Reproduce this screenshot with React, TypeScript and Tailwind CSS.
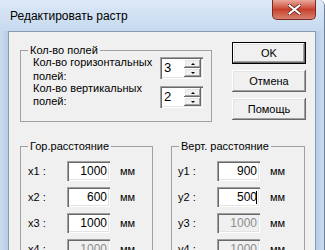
const sunken =
  "shadow-[inset_1px_1px_0_#a0a0a0,inset_2px_2px_0_#696969,inset_-1px_-1px_0_#ffffff,inset_-2px_-2px_0_#e3e3e3]";
const raised =
  "shadow-[inset_-1px_-1px_0_#696969,inset_1px_1px_0_#ffffff,inset_-2px_-2px_0_#a0a0a0,inset_2px_2px_0_#e3e3e3]";

const Spin = ({ value }: { value: string }) => (
  <div className={`flex h-[22px] w-[43px] shrink-0 bg-white p-[2px] ${sunken}`}>
    <div className="flex-1 pl-[2px] text-[13px] leading-[18px]">{value}</div>
    <div className="flex w-[17px] flex-col">
      <div className={`flex h-[9px] items-center justify-center bg-[#f0f0f0] ${raised}`}>
        <div className="h-0 w-0 border-x-[2px] border-b-[2px] border-x-transparent border-b-black" />
      </div>
      <div className={`flex h-[9px] items-center justify-center bg-[#f0f0f0] ${raised}`}>
        <div className="h-0 w-0 border-x-[2px] border-t-[2px] border-x-transparent border-t-black" />
      </div>
    </div>
  </div>
);

const Btn = ({ label, def }: { label: string; def?: boolean }) => (
  <div className={`h-[22px] w-[74px] ${def ? "border border-black" : ""}`}>
    <div
      className={`flex h-full w-full items-center justify-center bg-[#f0f0f0] text-[11px] ${raised}`}
    >
      {label}
    </div>
  </div>
);

const Row = ({
  label,
  value,
  off,
  caret,
}: {
  label: string;
  value: string;
  off?: boolean;
  caret?: boolean;
}) => (
  <div className="flex h-[20px] items-center">
    <span className="w-[39px] text-[11px]">{label}</span>
    <div
      className={`flex h-[20px] w-[43px] items-center justify-end pr-[3px] text-[12px] ${sunken} ${
        off ? "bg-[#f0f0f0] text-[#8d8d8d]" : "bg-white text-black"
      }`}
    >
      {value}
      {caret && <span className="ml-[-1px] h-[13px] w-[1px] bg-black" />}
    </div>
    <span className="ml-[10px] text-[11px]">мм</span>
  </div>
);

export default function App() {
  return (
    <div className="flex h-[250px] w-[325px] flex-col overflow-hidden rounded-tr-[6px] border-r border-[#6f8197] bg-[#c4d8ee] font-['Liberation_Sans',Arial,sans-serif] text-black">
      {/* title bar */}
      <div className="flex h-[31px] shrink-0 items-start justify-between bg-gradient-to-b from-[#dce9f7] to-[#c6d9ee]">
        <span className="pl-[10px] pt-[9px] text-[12px] leading-[14px]">Редактировать растр</span>
        <div className="mr-[8px] flex h-[20px] w-[44px] items-center justify-center rounded-b-[5px] border border-t-0 border-[#7b2b22] bg-gradient-to-b from-[#e8a89b] via-[#c7402b] to-[#d7806f]">
          <svg width="13" height="11" viewBox="0 0 13 11">
            <path
              d="M1 1 L12 10 M12 1 L1 10"
              stroke="#5a2019"
              strokeWidth="3.4"
              strokeLinecap="square"
            />
            <path
              d="M1.5 1.5 L11.5 9.5 M11.5 1.5 L1.5 9.5"
              stroke="#ffffff"
              strokeWidth="2"
              strokeLinecap="square"
            />
          </svg>
        </div>
      </div>

      <div className="flex min-h-0 flex-1">
        <div className="w-[8px] shrink-0 bg-gradient-to-r from-[#c9dcf0] to-[#b7cde6]" />
        <div className="flex-1 border border-b-0 border-[#8a9bb0] bg-[#f0f0f0] pl-[11px] pt-[10px] text-[11px]">
          <div className="flex items-start">
            <fieldset className="mt-[1px] h-[79px] w-[192px] border border-[#a0a0a0]">
              <legend className="ml-[7px] px-[2px] leading-[14px]">Кол-во полей</legend>
              <div className="pl-[12px] pr-[8px]">
                <div className="flex h-[22px] items-start justify-between">
                  <div className="mt-[-2px] whitespace-nowrap leading-[14px]">
                    Кол-во горизонтальных
                    <br />
                    полей:
                  </div>
                  <Spin value="3" />
                </div>
                <div className="mt-[7px] flex h-[22px] items-start justify-between">
                  <div className="mt-[-4px] whitespace-nowrap leading-[13px]">
                    Кол-во вертикальных
                    <br />
                    полей:
                  </div>
                  <Spin value="2" />
                </div>
              </div>
            </fieldset>
            <div className="ml-[20px] flex flex-col gap-[6px]">
              <Btn label="OK" def />
              <Btn label="Отмена" />
              <Btn label="Помощь" />
            </div>
          </div>

          <div className="mt-[17px] flex">
            <fieldset className="h-[120px] w-[133px] border border-[#a0a0a0]">
              <legend className="ml-[7px] px-[2px] leading-[14px]">Гор.расстояние</legend>
              <div className="flex flex-col gap-[6px] pl-[7px] pt-[8px]">
                <Row label="x1 :" value="1000" />
                <Row label="x2 :" value="600" />
                <Row label="x3 :" value="1000" />
                <Row label="x4 :" value="1000" off />
              </div>
            </fieldset>
            <fieldset className="ml-[18px] h-[120px] w-[134px] border border-[#a0a0a0]">
              <legend className="ml-[7px] px-[2px] leading-[14px]">Верт. расстояние</legend>
              <div className="flex flex-col gap-[6px] pl-[6px] pt-[8px]">
                <Row label="y1 :" value="900" />
                <Row label="y2 :" value="500" caret />
                <Row label="y3 :" value="1000" off />
                <Row label="y4 :" value="1000" off />
              </div>
            </fieldset>
          </div>
        </div>
        <div className="w-[8px] shrink-0 bg-gradient-to-r from-[#b7cde6] to-[#c9dcf0]" />
      </div>
    </div>
  );
}
